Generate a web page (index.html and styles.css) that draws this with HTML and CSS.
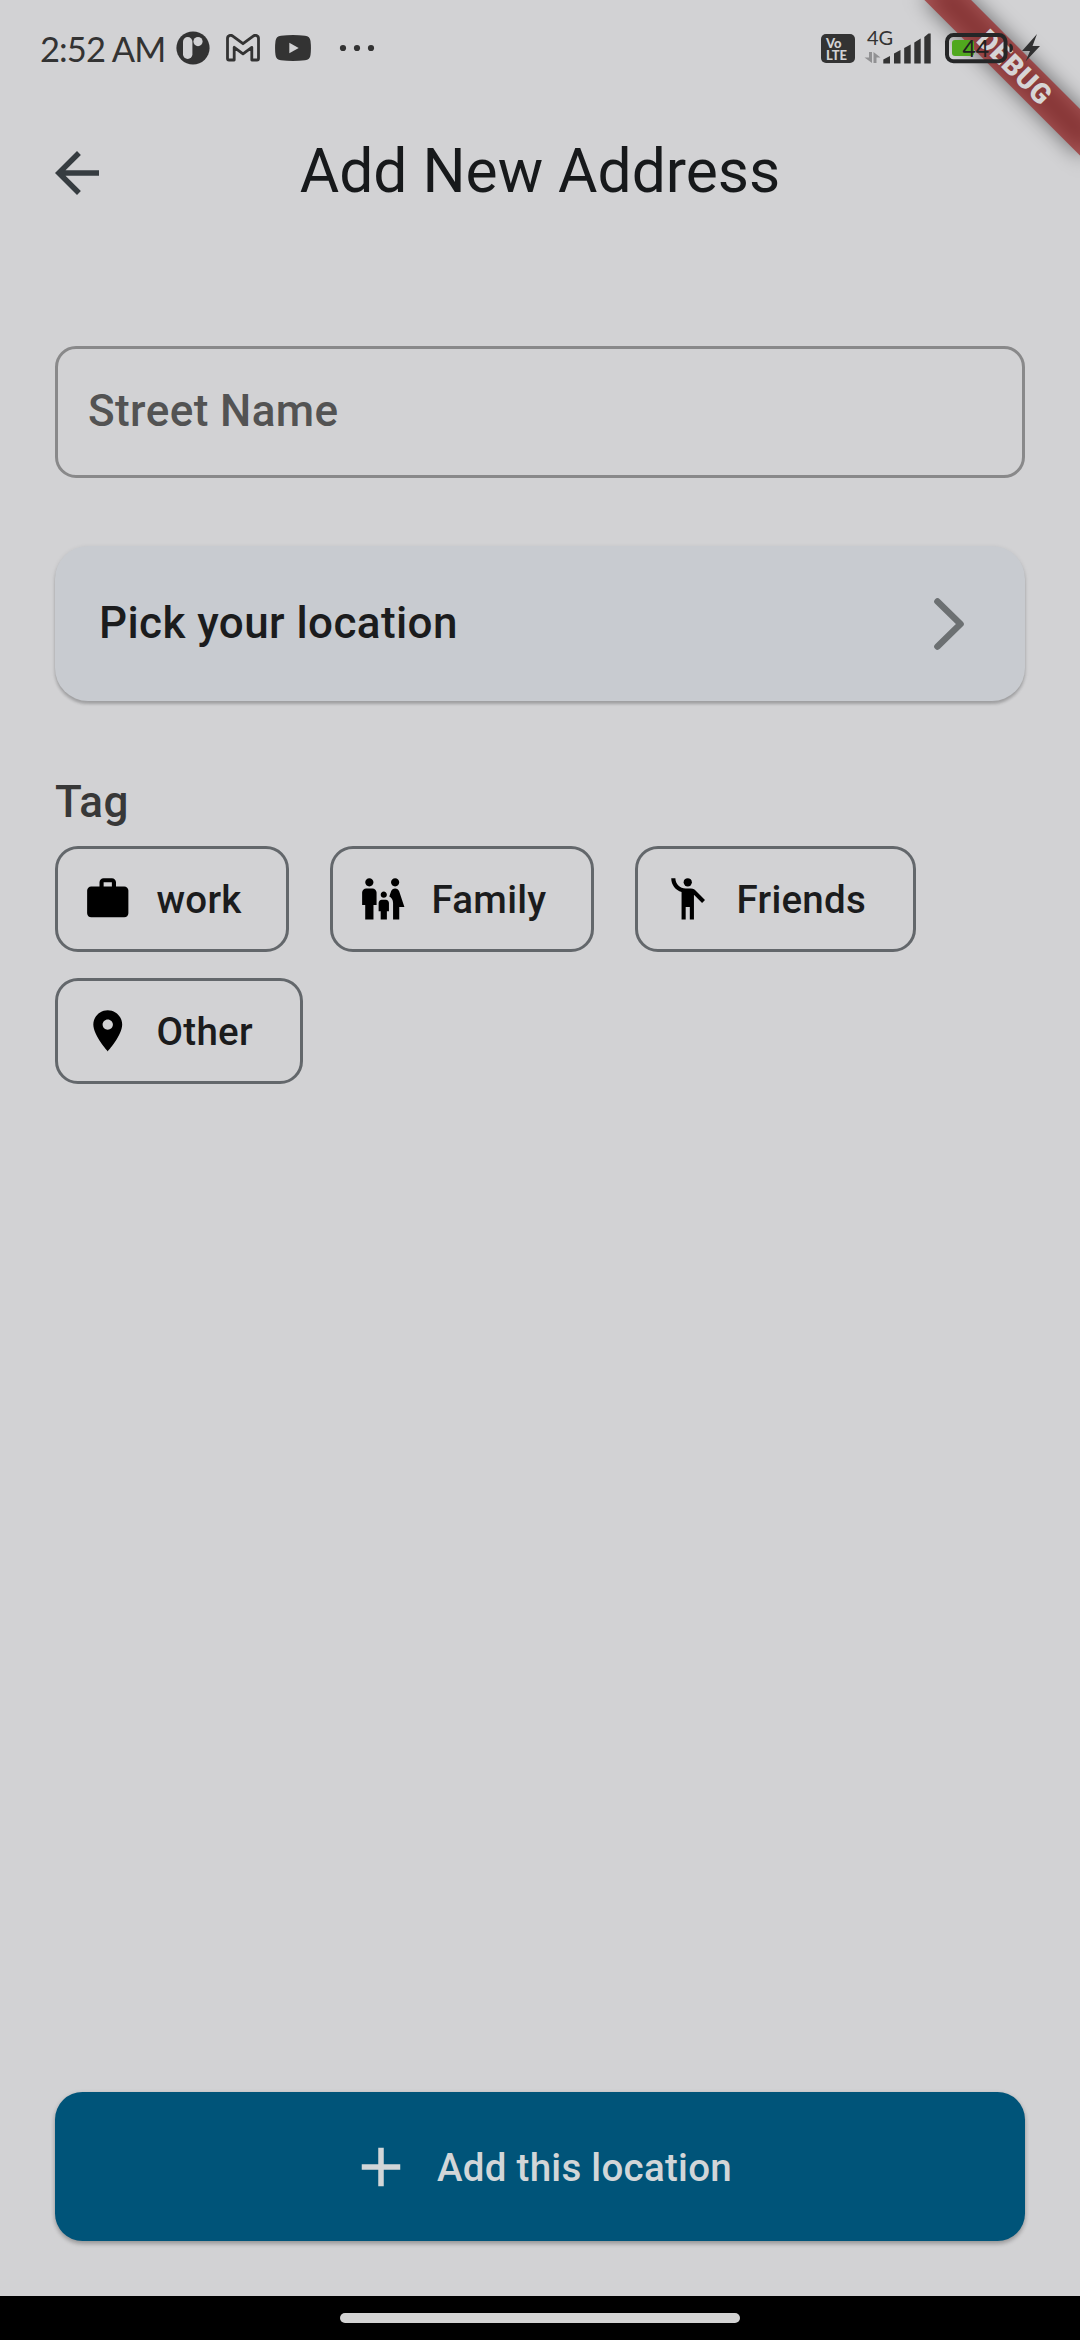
FILE: index.html
```html
<!DOCTYPE html>
<html lang="en">
<head>
<meta charset="utf-8">
<title>Add New Address</title>
<link rel="stylesheet" href="styles.css">
</head>
<body>
<div class="screen">
  <svg class="debug-banner" width="220" height="220" viewBox="860 0 220 220">
    <defs><filter id="soft" x="-30%" y="-150%" width="160%" height="400%"><feGaussianBlur stdDeviation="10.9"/></filter></defs>
    <g transform="translate(1080 0) rotate(45)">
      <rect x="-110" y="77" width="220" height="33" fill="#000" fill-opacity=".5" filter="url(#soft)"/>
      <rect x="-110" y="77" width="220" height="33" fill="#981717" fill-opacity=".627"/>
      <text class="debug-text" x="1.5" y="103.3" text-anchor="middle">DEBUG</text>
    </g>
  </svg>

  <div class="status">
    <div class="status-left">
      <span class="time">2:52 AM</span>
      <svg class="s-app" width="34" height="34" viewBox="0 0 34 34"><circle cx="17" cy="17" r="16.6" fill="#333"/><rect x="7" y="6" width="9.4" height="22" rx="4.7" fill="#d2d2d4"/><circle cx="22" cy="10.6" r="4.6" fill="#d2d2d4"/></svg>
      <svg class="s-mail" width="34" height="28" viewBox="0 0 34 28"><path d="M1.500 24.500V4.600C1.500 1.400 4.800.6 6.800 2.100L17 9.700 27.200 2.100C29.200.6 32.500 1.400 32.500 4.600V24.500Q32.500 26 31 26H25.800V13.300L17 19.900 8.200 13.300V26H3Q1.500 26 1.500 24.500Z" fill="none" stroke="#333" stroke-width="2.8" stroke-linejoin="round"/></svg>
      <svg class="s-play" width="36" height="26" viewBox="0 0 36 26"><path d="M6 .7Q18-.6 30 .7 35 1.200 35.500 6 36.400 13 35.500 20 35 24.800 30 25.300 18 26.500 6 25.300 1 24.800.5 20-.4 13 .5 6 1 1.200 6 .7Z" fill="#333"/><path d="M14.300 7.800 23.700 13 14.300 18.200Z" fill="#d2d2d4"/></svg>
      <svg width="36" height="8" viewBox="0 0 36 8" fill="#333"><circle cx="4" cy="4" r="3.100"/><circle cx="18" cy="4" r="3.100"/><circle cx="32" cy="4" r="3.100"/></svg>
    </div>
    <div class="status-right">
      <div class="volte"><span>Vo</span><span>LTE</span></div>
      <svg class="signal" width="68" height="44" viewBox="864 25 68 44">
        <text class="net" x="867" y="45">4G</text>
        <g fill="#919193"><path d="M869 52H872V63L864.500 57.500H869Z"/><path d="M873.500 63H876.500V57.500H880.500L873.500 52Z"/></g>
        <g fill="#333"><path d="M883.300 59.500 890 56V63.500H883.300Z"/><path d="M894 53.500 900.500 50V63.500H894Z"/><path d="M904.200 48 910.700 44.500V63.500H904.200Z"/><path d="M914.300 42.500 920.700 38.500V63.500H914.300Z"/><path d="M924.300 37 928.500 33.500H930.700V63.500H924.300Z"/></g>
      </svg>
      <svg class="battery" width="70" height="32" viewBox="944 32 70 32"><rect x="952" y="40" width="22" height="16" rx="3" fill="#50a81e"/><rect x="947" y="35" width="58.500" height="26.300" rx="6.500" fill="none" stroke="#252627" stroke-width="4"/><path d="M1009.500 43.500Q1013 44 1013 48T1009.500 52.500Z" fill="#252627"/><text class="pct" x="962.500" y="57">44</text></svg>
      <svg width="20" height="28" viewBox="1021 34 20 28"><path d="M1037 34 1022 51H1030L1025.500 61.500 1040 46H1032.500Z" fill="#303031"/></svg>
    </div>
  </div>

  <header class="appbar">
    <svg class="back" width="66" height="66" viewBox="0 0 24 24"><path d="M20 11H7.830l5.590-5.590L12 4l-8 8 8 8 1.410-1.410L7.830 13H20v-2z" fill="#363c40"/></svg>
    <h1 class="title">Add New Address</h1>
  </header>

  <main class="form">
    <div class="field">Street Name</div>
    <div class="picker">
      <span>Pick your location</span>
      <svg width="32" height="54" viewBox="0 0 32 54"><path d="M4.500 4.500 27.500 27 4.500 49.500" fill="none" stroke="#6c7072" stroke-width="6.600" stroke-linecap="round" stroke-linejoin="round"/></svg>
    </div>
    <h2 class="tag-title">Tag</h2>
    <div class="chips">
      <div class="chip chip-work"><svg viewBox="0 0 24 24"><path d="M20 6h-4V4c0-1.110-.89-2-2-2h-4c-1.110 0-2 .89-2 2v2H4c-1.110 0-1.990.89-1.990 2L2 19c0 1.110.89 2 2 2h16c1.110 0 2-.89 2-2V8c0-1.110-.89-2-2-2zm-6 0h-4V4h4v2z"/></svg><span>work</span></div>
      <div class="chip chip-family"><svg viewBox="0 0 24 24"><path d="M16 4c0-1.110.89-2 2-2s2 .89 2 2-.89 2-2 2-2-.89-2-2zm4 18v-6h2.500l-2.540-7.630C19.680 7.550 18.920 7 18.060 7h-.12c-.86 0-1.630.55-1.900 1.370l-.86 2.580c1.080.6 1.820 1.730 1.820 3.050v8h3zm-7.500-10.500c.83 0 1.500-.67 1.500-1.500s-.67-1.500-1.500-1.500S11 9.170 11 10s.67 1.500 1.500 1.500zM5.500 6c1.110 0 2-.89 2-2s-.89-2-2-2-2 .89-2 2 .89 2 2 2zm2 16v-7H9V9c0-1.100-.9-2-2-2H4c-1.100 0-2 .9-2 2v6h1.500v7h4zm6.500 0v-4h1v-4c0-.82-.68-1.500-1.500-1.500h-2c-.82 0-1.500.68-1.500 1.500v4h1v4h3z"/></svg><span>Family</span></div>
      <div class="chip chip-friends"><svg viewBox="0 0 24 24"><circle cx="12" cy="4" r="2"/><path d="M15.890 8.110C15.500 7.720 14.830 7 13.530 7h-2.540C8.240 6.990 6 4.750 6 2H4c0 3.160 2.110 5.840 5 6.710V22h2v-6h2v6h2V10.050L18.950 14l1.410-1.410-4.470-4.480z"/></svg><span>Friends</span></div>
      <div class="chip chip-other"><svg viewBox="0 0 24 24"><path d="M12 2C8.130 2 5 5.130 5 9c0 5.250 7 13 7 13s7-7.750 7-13c0-3.870-3.130-7-7-7zm0 9.500c-1.380 0-2.500-1.120-2.500-2.500s1.120-2.500 2.500-2.500 2.500 1.120 2.500 2.500-1.120 2.500-2.500 2.500z"/></svg><span>Other</span></div>
    </div>
  </main>

  <div class="add">
    <svg width="66" height="66" viewBox="0 0 24 24"><path d="M19 13h-6v6h-2v-6H5v-2h6V5h2v6h6v2z" fill="#d2d6d8"/></svg>
    <span>Add this location</span>
  </div>
  <div class="navbar"><div class="pill"></div></div>
</div>
</body>
</html>
```
FILE: styles.css
```css
* { box-sizing: border-box; }
body { margin: 0; background: #d2d2d4; }
svg { display: block; flex: none; }

.screen {
  position: relative;
  width: 1080px;
  height: 2340px;
  overflow: hidden;
  display: flex;
  flex-direction: column;
  background: #d2d2d4;
  font-family: Roboto, sans-serif;
  color: #1b1c1d;
}

.debug-banner { position: absolute; top: 0; right: 0; }
.debug-text { font: 900 28px Roboto, sans-serif; letter-spacing: .6px; fill: #d6d4d5; }

/* The status bar is painted over the ribbon. */
.status {
  position: relative;
  height: 96px;
  padding: 0 39px 0 40px;
  display: flex;
  justify-content: space-between;
  align-items: center;
}
.status-left, .status-right { display: flex; align-items: center; }
.time { width: 136px; padding-top: 2px; font: 400 34.5px/40px Lato, sans-serif; letter-spacing: -.9px; color: #333; white-space: nowrap; }
.s-mail { margin-left: 16px; }
.s-play { margin: 0 28px 0 15px; }
.volte {
  width: 34px;
  height: 29px;
  border-radius: 5px;
  background: #333;
  color: #d2d2d4;
  font: 900 13px/12px Lato, sans-serif;
  padding: 3px 0 0 5px;
  display: flex;
  flex-direction: column;
}
.signal { margin: -3px 12px 0 9px; }
.net { font: 400 20px Lato, sans-serif; fill: #333; }
.battery { margin-right: 7px; }
.pct { font: 400 23px Lato, sans-serif; fill: #202020; }

.appbar {
  height: 154px;
  padding: 0 44px;
  display: grid;
  grid-template-columns: 66px 1fr 66px;
  align-items: center;
}
.title { margin: -3px 0 0; text-align: center; font-size: 60.5px; line-height: 76px; font-weight: 400; color: #17191b; }

.form { flex: 1; padding: 96px 55px 0; }
.field {
  height: 132px;
  border: 3px solid #89898a;
  border-radius: 21px;
  padding: 0 30px 2px;
  display: flex;
  align-items: center;
  font-size: 44px;
  font-weight: 500;
  letter-spacing: .41px;
  color: #535353;
}
.picker {
  height: 155px;
  margin-top: 68px;
  padding: 0 60px 0 44px;
  border-radius: 33px;
  background: #c8cbd0;
  box-shadow: 0 3px 3px rgba(0, 0, 0, .2), 0 1px 5px rgba(0, 0, 0, .09);
  display: flex;
  align-items: center;
  justify-content: space-between;
  font-size: 44px;
  font-weight: 500;
  letter-spacing: .41px;
}
.picker span { padding-bottom: 2px; }
.tag-title { margin: 75px 0 18px; font-size: 44px; line-height: 52px; font-weight: 500; letter-spacing: .41px; color: #383838; }
.chips { display: flex; flex-wrap: wrap; gap: 26.5px 41px; }
.chip {
  height: 105.5px;
  border: 3px solid #63676b;
  border-radius: 23px;
  padding-left: 25px;
  display: flex;
  align-items: center;
  gap: 24px;
  font-size: 38.5px;
  font-weight: 500;
  letter-spacing: .275px;
}
.chip svg { width: 49.5px; height: 49.5px; fill: #000; }
.chip span { padding-top: 1.5px; }
.chip-work { width: 234px; }
.chip-family { width: 264px; }
.chip-friends { width: 281px; }
.chip-other { width: 248px; }

.add {
  height: 149px;
  margin: 0 55px 55px;
  border-radius: 27.5px;
  background: #005479;
  box-shadow: 0 3px 4px rgba(0, 0, 0, .22), 0 1px 5px rgba(0, 0, 0, .1);
  display: flex;
  align-items: center;
  justify-content: center;
  gap: 23px;
  font-size: 38.5px;
  font-weight: 500;
  letter-spacing: .275px;
  color: #d2d6d8;
}
.add span { padding-top: 1px; }
.navbar { height: 44px; background: #000; padding-top: 17px; }
.pill { width: 400px; height: 10px; margin: 0 auto; border-radius: 5px; background: #d3d3d3; }
```
